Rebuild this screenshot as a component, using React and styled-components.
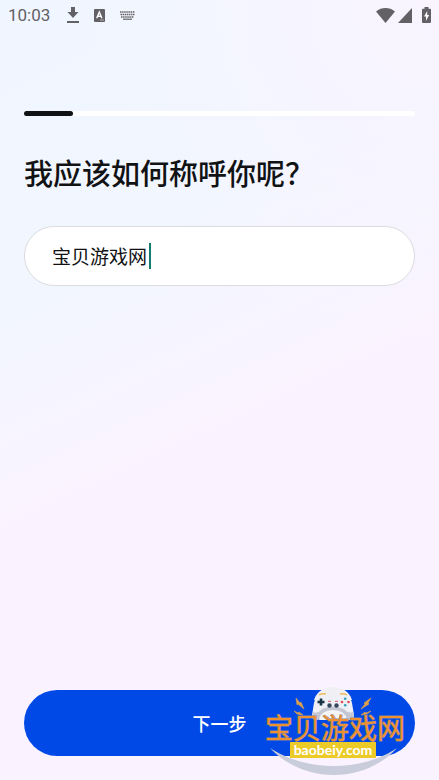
import React, { useState } from "react";
import styled, { createGlobalStyle } from "styled-components";

const GlobalStyle = createGlobalStyle`
  * {
    box-sizing: border-box;
  }

  body {
    margin: 0;
    font-family: "Noto Sans CJK SC", "Noto Sans", sans-serif;
    color: #111214;
  }
`

const Screen = styled.div`
  position: relative;
  display: flex;
  flex-direction: column;
  min-height: 100vh;
  background:
    radial-gradient(circle at 100% 0%, #f9f4ff 0%, rgba(249, 244, 255, 0) 40%),
    linear-gradient(155deg, #f0f6ff 0%, #f1f6ff 30%, #faf3ff 54%, #faf3ff 100%);
`

const StatusBar = styled.header`
  display: flex;
  align-items: center;
  justify-content: space-between;
  height: 30px;
  padding: 0 8px;
  color: #636166;
`

const StatusGroup = styled.div`
  display: flex;
  align-items: center;
  gap: ${props => props.$gap}px;
`

const Clock = styled.time`
  margin-right: 2px;
  font-family: Roboto, sans-serif;
  font-size: 17px;
  line-height: 20px;
`

const Content = styled.form`
  display: flex;
  flex: 1;
  flex-direction: column;
  padding: 81px 24px 24px;
`

const Progress = styled.div`
  height: 5px;
  border-radius: 3px;
  background: #ffffff;
`

const ProgressFill = styled.div`
  height: 100%;
  border-radius: 3px;
  background: #111214;
`

const Question = styled.label`
  margin-top: 34px;
  font-size: 29px;
  font-weight: 500;
  line-height: 44px;
`

const Field = styled.div`
  display: flex;
  align-items: center;
  height: 60px;
  margin-top: 32px;
  padding: 0 27px;
  border: 1px solid #dcdce0;
  border-radius: 30px;
  background: #ffffff;
`

const NameInput = styled.input`
  field-sizing: content;
  max-width: 100%;
  padding: 0;
  border: 0;
  outline: 0;
  background: transparent;
  color: #111214;
  font: inherit;
  font-size: 19px;
  font-weight: 400;
  line-height: 28px;
  caret-color: transparent;
`

const Caret = styled.span`
  flex: none;
  width: 2px;
  height: 26px;
  margin-left: 2px;
  background: #137c70;
`

const NextButton = styled.button`
  height: 66px;
  margin-top: auto;
  border: 0;
  border-radius: 33px;
  background: #0049e6;
  color: #ffffff;
  font: inherit;
  font-size: 18px;
  font-weight: 500;
  cursor: pointer;
`

const Watermark = styled.svg`
  position: absolute;
  right: 29px;
  bottom: 0;
  width: 150px;
  height: 96px;
  pointer-events: none;
`

const MarkName = styled.text`
  font-family: "Noto Sans CJK SC", sans-serif;
  font-size: 28px;
  font-weight: 400;
  fill: #ee9030;
  stroke: #8d8a98;
  stroke-width: 1px;
  paint-order: stroke;
`

const MarkSite = styled.text`
  font-family: Lato, sans-serif;
  font-size: 14px;
  font-weight: 700;
  text-anchor: middle;
  fill: #ffffff;
`


function DownloadIcon() {
  return (
    <svg width="12" height="16" viewBox="0 0 12 16" fill="currentColor">
      <path d="M4 0h4v5h3.500L6 11 .5 5H4zM0 14h12v2H0z" />
    </svg>
  );
}

function LetterIcon() {
  return (
    <svg width="11" height="13" viewBox="0 0 11 13" fill="currentColor">
      <rect width="11" height="13" rx="1" />
      <path d="M2.700 9.200 5.300 3l2.600 6.200M3.700 7.200h3.200" fill="none" stroke="#fff" strokeWidth="1.400" />
      <path d="M6.500 11h1M8.500 11h1" stroke="#fff" strokeWidth="1" />
    </svg>
  );
}

function KeyboardIcon() {
  return (
    <svg width="15" height="9" viewBox="0 0 15 9" stroke="currentColor" fill="none">
      <path d="M0 1h15M.5 3.500h14M1 6h13" strokeWidth="1.500" strokeDasharray="1.500 .6" />
      <path d="M3 8.200h9" strokeWidth="1.200" />
    </svg>
  );
}

function WifiIcon() {
  return (
    <svg width="19" height="15" viewBox="0 0 19 15" fill="currentColor">
      <path d="M0 3.500C5.500-1.100 13.500-1.100 19 3.500L9.500 15z" />
    </svg>
  );
}

function SignalIcon() {
  return (
    <svg width="14" height="15" viewBox="0 0 14 15" fill="currentColor">
      <path d="M14 0v15H0z" />
    </svg>
  );
}

function BatteryIcon() {
  return (
    <svg width="9" height="16" viewBox="0 0 9 16" fill="currentColor">
      <path d="M2.500 0h4v1.700H8q1 0 1 1V15q0 1-1 1H1q-1 0-1-1V2.700q0-1 1-1h1.500z" />
      <path d="M5.200 4 2 9.500h2v4.200l3.200-5.700H5.200z" fill="#fff" />
    </svg>
  );
}

function SiteMark() {
  return (
    <Watermark viewBox="0 0 150 96" role="img" aria-label="宝贝游戏网 baobeiy.com">
      <path d="M10 64C46 88 102 88 137 64C104 100 44 100 10 64z" fill="#c9ccda" />
      <path d="M54 16C57 7 64 3 73 3s16 4 19 13z" fill="#f0f0f4" />
      <path d="M60 11q3-2 8 0h10q5-2 8 0 5 2 6 8l2 12q0 5-4 5-4 0-6-5-11-9-22 0-2 5-6 5-4 0-4-5l2-12q1-6 6-8z" fill="#eef0f5" />
      <path d="M53 28q5 2 9-3 11-5 22 0 4 5 9 3l1 4q0 4-4 4-4 0-6-5-11-9-22 0-2 5-6 5-4 0-4-4z" fill="#c5c8d4" />
      <path d="M59 36q2-10 14-10t14 10z" fill="#f5f5f7" />
      <path d="M59 11q3-2 7-1M80 10q4-1 7 1" fill="none" stroke="#edbc59" strokeWidth="1.500" />
      <path d="M57.500 18h7M61 14.500v7" stroke="#173344" strokeWidth="2.600" />
      <circle cx="69.500" cy="21.500" r="2.200" fill="#34475d" />
      <circle cx="76.500" cy="21.500" r="2.200" fill="#34475d" />
      <path d="M68 17.300h3M75 17.300h3" stroke="#d55a69" strokeWidth="1" />
      <circle cx="82" cy="18" r="1.300" fill="#e14b55" />
      <circle cx="88.500" cy="18" r="1.300" fill="#e14b55" />
      <circle cx="85.200" cy="14.800" r="1.300" fill="#2d9eb8" />
      <circle cx="85.200" cy="21.200" r="1.300" fill="#2d9eb8" />
      <g fill="#dda14b" stroke="#dda14b" strokeWidth=".6">
        <path d="m36 14 4 5 1-1 3 7-6-5-1 1z" />
        <path d="m34 27 4 2 1-1 4 3-6-1z" />
        <path d="m111 14-7 5 1 1-4 5 8-5-1-1z" />
        <path d="m111 27-5 2-1-1-4 3 6-1z" />
      </g>
      <rect x="30" y="58" width="86" height="16" fill="#eccb28" />
      <MarkName x="5" y="55">宝贝游戏网</MarkName>
      <MarkSite x="73" y="71">baobeiy.com</MarkSite>
    </Watermark>
  );
}


function App() {
  const [name, setName] = useState("宝贝游戏网");
  const step = 1;
  const steps = 8;

  return (
    <Screen>
      <GlobalStyle />
      <StatusBar>
        <StatusGroup $gap={15}>
          <Clock>10:03</Clock>
          <DownloadIcon />
          <LetterIcon />
          <KeyboardIcon />
        </StatusGroup>
        <StatusGroup $gap={10}>
          <StatusGroup $gap={3}>
            <WifiIcon />
            <SignalIcon />
          </StatusGroup>
          <BatteryIcon />
        </StatusGroup>
      </StatusBar>
      <Content onSubmit={event => event.preventDefault()}>
        <Progress role="progressbar" aria-label="步骤" aria-valuenow={step} aria-valuemax={steps}>
          <ProgressFill style={{ width: `${(step / steps) * 100}%` }} />
        </Progress>
        <Question htmlFor="name">我应该如何称呼你呢？</Question>
        <Field>
          <NameInput id="name" value={name} onChange={event => setName(event.target.value)} />
          <Caret />
        </Field>
        <NextButton type="submit">下一步</NextButton>
      </Content>
      <SiteMark />
    </Screen>
  );
}


export default App;
